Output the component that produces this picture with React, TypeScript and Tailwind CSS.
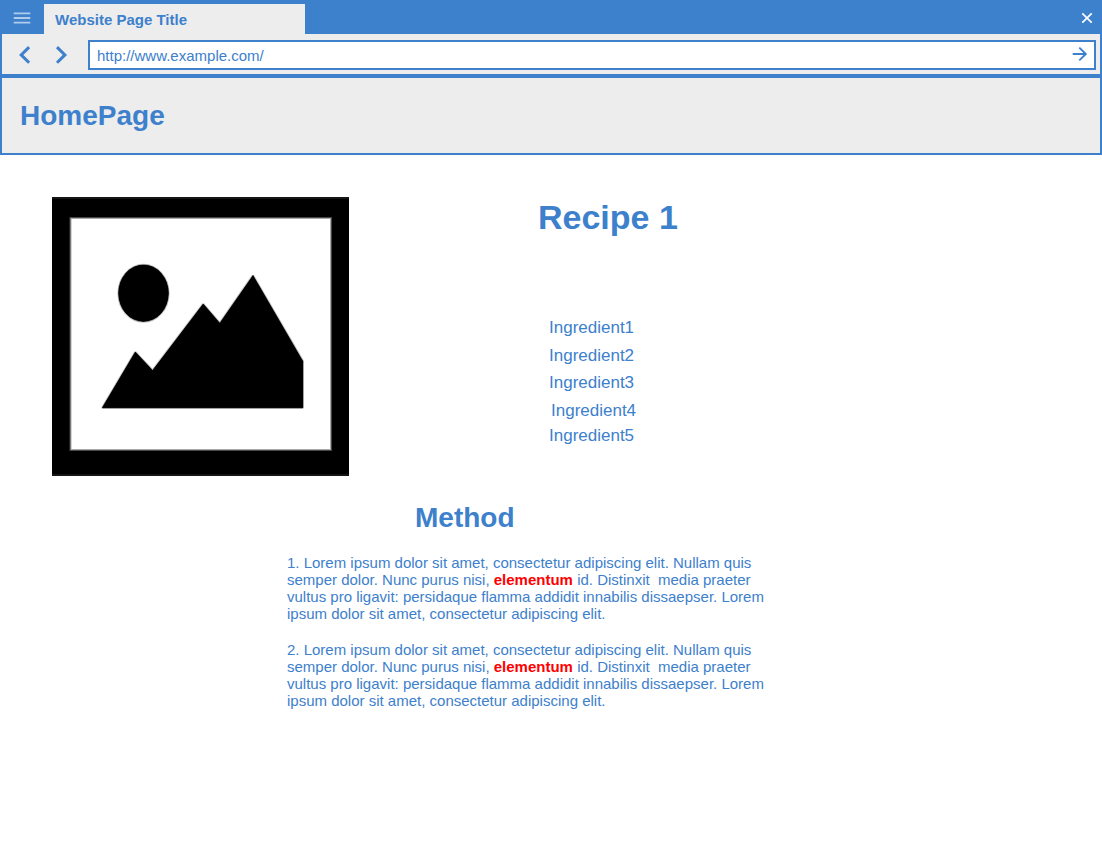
const ingredients = [
  { name: 'Ingredient1', spacing: '' },
  { name: 'Ingredient2', spacing: 'mt-[9px]' },
  { name: 'Ingredient3', spacing: 'mt-2' },
  { name: 'Ingredient4', spacing: 'mt-[9px] ml-0.5' },
  { name: 'Ingredient5', spacing: 'mt-1.5' },
];

function BrowserChrome() {
  return (
    <div className="border-x-2 border-b-2 border-[#3d80cc]">
      <div className="flex h-[34px] justify-between bg-[#3d80cc]">
        <div className="flex">
          <button aria-label="Menu" className="h-[34px] w-[42px] pl-[11px]">
            <svg width="18" height="34" viewBox="0 0 18 34" stroke="#b0ccea" strokeWidth="1.8">
              <path d="M0.7 13.3H17.3M0.7 18H17.3M0.7 22.7H17.3" />
            </svg>
          </button>
          <div className="mt-1 h-[30px] w-[261px] bg-[#ededed] pt-[7px] pl-[11px] text-[15px] leading-[17px] font-bold">
            Website Page Title
          </div>
        </div>
        <button aria-label="Close" className="mr-[7px] h-[34px] w-3">
          <svg width="12" height="34" viewBox="0 0 12 34" stroke="#fff" strokeWidth="1.7">
            <path d="M1.3 13.3L10.7 22.7M10.7 13.3L1.3 22.7" />
          </svg>
        </button>
      </div>
      <div className="flex h-10 bg-[#ededed] pt-1.5 pr-1">
        <div className="flex w-[86px] gap-6 pl-[17px]">
          <svg width="12" height="30" viewBox="0 0 12 30" fill="none" stroke="#3d80cc" strokeWidth="3">
            <path d="M10.1 7.1L2.2 14.9L10.1 22.7" />
          </svg>
          <svg width="14" height="30" viewBox="0 0 14 30" fill="none" stroke="#3d80cc" strokeWidth="3">
            <path d="M2 7.1L9.9 14.9L2 22.7" />
          </svg>
        </div>
        <div className="flex h-[30px] flex-1 justify-between border-2 border-[#3d80cc] bg-white pr-1.5 pl-[7px]">
          <span className="pt-[5px] text-[15px] leading-[17px]">http://www.example.com/</span>
          <svg width="16" height="26" viewBox="0 0 16 26" fill="none" stroke="#3d80cc" strokeWidth="1.9">
            <path d="M0.7 12H13.8M7.3 5.6L13.8 12L7.3 18.4" />
          </svg>
        </div>
      </div>
    </div>
  );
}

const MOUNTAINS = 'M50.3 210.8L83.3 155L100.6 173.5L151.2 107L167.8 126.3L201 78.5L250.8 164.2V210.8Z';

function PicturePlaceholder() {
  return (
    <svg width="297" height="279" viewBox="0 0 297 279" className="shrink-0">
      <rect width="297" height="279" fill="#000" />
      <path d="M0 1H297M0 278H297" stroke="#151515" strokeWidth="2" />
      <rect x="17.5" y="20" width="262.5" height="234" fill="#474747" />
      <rect x="18.5" y="21" width="260.5" height="232" fill="#aaa" />
      <rect x="19.5" y="22" width="258.5" height="230" fill="#fff" />
      <g stroke="#000" strokeOpacity="0.25" strokeWidth="2.4" strokeLinejoin="bevel">
        <ellipse cx="91.5" cy="96.2" rx="24.9" ry="28.3" />
        <path d={MOUNTAINS} />
      </g>
      <g stroke="#000" strokeOpacity="0.5" strokeWidth="1">
        <ellipse cx="91.5" cy="96.2" rx="24.9" ry="28.3" />
        <path d={MOUNTAINS} />
      </g>
    </svg>
  );
}

function Step({ number }: { number: number }) {
  return (
    <p className="whitespace-pre">
      {number}. Lorem ipsum dolor sit amet, consectetur adipiscing elit. Nullam quis
      <br />
      semper dolor. Nunc purus nisi, <strong className="text-[#ff0000]">elementum</strong>
      {' id. Distinxit  media praeter'}
      <br />
      vultus pro ligavit: persidaque flamma addidit innabilis dissaepser. Lorem
      <br />
      ipsum dolor sit amet, consectetur adipiscing elit.
    </p>
  );
}

export default function App() {
  return (
    <div className="min-h-screen bg-white font-['Liberation_Sans',Arial,sans-serif] text-[#3d80cc]">
      <BrowserChrome />
      <header className="h-[79px] border-2 border-[#3d80cc] bg-[#ededed] pt-[22px] pl-[18px]">
        <h1 className="text-[28px] leading-[31px] font-bold">HomePage</h1>
      </header>
      <main>
        <section className="flex pt-[42px] pl-[52px]">
          <PicturePlaceholder />
          <div className="ml-[189px] pt-px">
            <h2 className="text-[34px] leading-[38px] font-bold">Recipe 1</h2>
            <ul className="mt-[82px] ml-[11px] text-[17px] leading-[19px]">
              {ingredients.map(({ name, spacing }) => (
                <li key={name} className={spacing}>
                  {name}
                </li>
              ))}
            </ul>
          </div>
        </section>
        <section className="pt-[26px] pl-[287px]">
          <h2 className="ml-32 text-[28px] leading-[31px] font-bold">Method</h2>
          <div className="mt-[21px] flex flex-col gap-[19px] text-[15px] leading-[17px]">
            <Step number={1} />
            <Step number={2} />
          </div>
        </section>
      </main>
    </div>
  );
}
